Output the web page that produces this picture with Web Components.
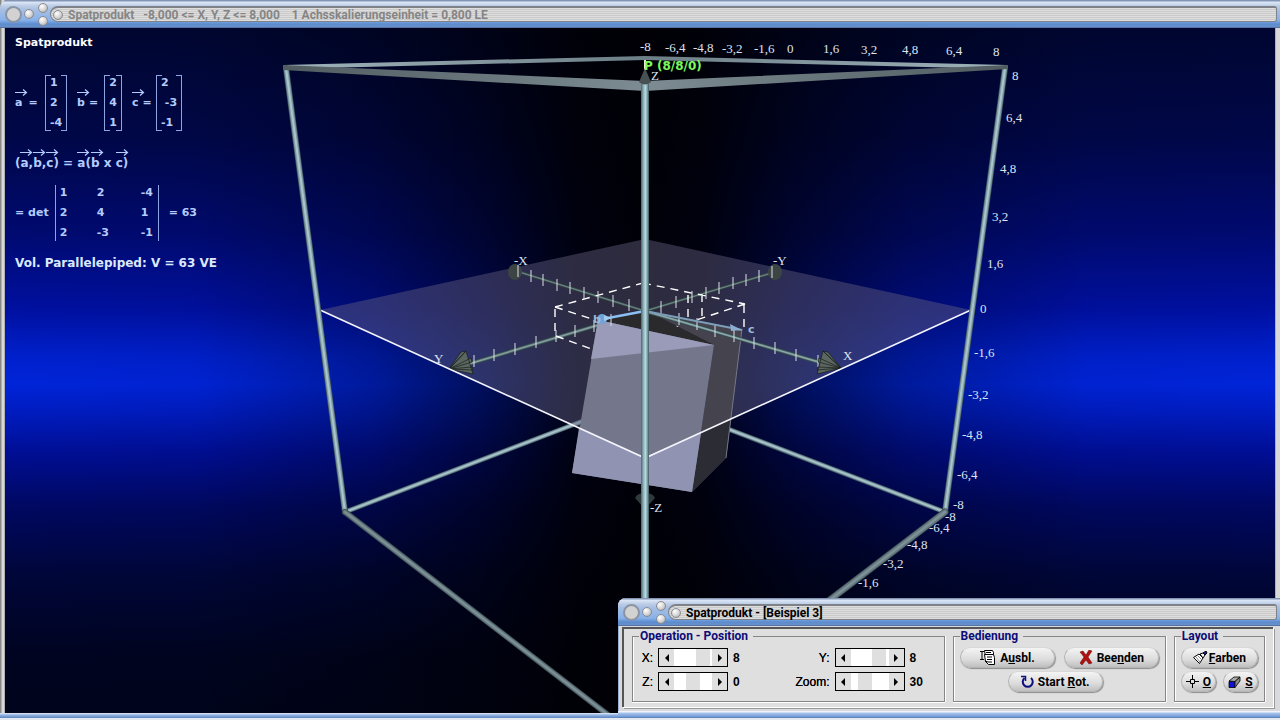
<!DOCTYPE html>
<html lang="de">
<head>
<meta charset="utf-8">
<title>Spatprodukt</title>
<style>
  html, body { margin: 0; height: 100%; overflow: hidden; }
  body { font: bold 12px/14px Roboto, "Liberation Sans", sans-serif; color: #000; background: #e4e8f0; }
</style>
</head>
<body>
<sp-desktop></sp-desktop>
<script>
class Base extends HTMLElement {
  connectedCallback() {
    if (this.shadowRoot) return;
    this.attachShadow({ mode: 'open' }).innerHTML = this.render();
    this.ready && this.ready();
  }
}

/* Title bar with the round window buttons and the ribbed grip */
class TitleBar extends Base {
  render() {
    return `<style>
      :host { display: flex; align-items: center; height: 28px; box-sizing: border-box; padding: 0 3px 0 5px; gap: 2px; color: #000;
        border-radius: 8px 0 0 0;
        background: linear-gradient(#8494b4 0, #8494b4 1px, #dce8f8 2px, #bccce6 6px, #a6bee2 10px, #88b2ea 20px, #5c8cd0 24px, #6890c8 27px, #405888 28px); }
      :host([inactive]) { color: #858585; }
      button { display: block; width: 10px; height: 10px; padding: 0; border: 1px solid #8c8c94; border-radius: 50%;
        background: radial-gradient(circle at 35% 30%, #fff, #d0d0d0 60%, #909090); }
      button.big { width: 17px; height: 17px; background: #d2d2d2; border: 2px solid #8a94a4; }
      .pair { display: grid; gap: 3px; margin-left: 2px; }
      .grip { flex: 1; display: flex; align-items: center; gap: 5px; height: 16px; box-sizing: border-box; padding-left: 2px;
        border: 1px solid #7e8288; border-top-width: 2px; border-radius: 9px 3px 3px 9px;
        background: repeating-linear-gradient(#dedede 0 1px, #cacaca 1px 2px); }
      h1 { margin: 0; font: inherit; white-space: pre; }
    </style>
    <button class="big" aria-label="Systemmenü"></button>
    <button aria-label="Minimieren"></button>
    <div class="pair"><button aria-label="Maximieren"></button><button aria-label="Verkleinern"></button></div>
    <div class="grip"><button aria-label="Einrollen"></button><h1><slot></slot></h1></div>`;
  }
}
customElements.define('title-bar', TitleBar);

/* A letter with a vector arrow above it */
class VecLetter extends Base {
  render() {
    return `<style>
      :host { display: inline-flex; flex-direction: column; }
      .box { width: 0; height: 7px; }
      svg { display: block; overflow: visible; }
    </style>
    <div class="box"><svg width="12" height="7" fill="none" stroke="#b4ccff" stroke-width="1.200"><path d="M0 3.5H11.500M8 .5l3.500 3-3.500 3"/></svg></div><span><slot></slot></span>`;
  }
}
customElements.define('vec-letter', VecLetter);

/* Column of matrix cells between square brackets, or rows between bars */
class MatrixBox extends Base {
  render() {
    const rows = this.getAttribute('rows').split(';').map(r => r.split(' '));
    const det = this.hasAttribute('det');
    return `<style>
      :host { display: grid; position: relative; box-sizing: border-box; grid-auto-rows: 20px; line-height: 20px; padding: 0 0 0 5px;
        grid-template-columns: ${det ? '37px 44px 1fr' : '1fr'}; }
      :host([det]) { width: 104px; }
      :host([center]) { text-align: center; padding: 0; }
      i { position: absolute; top: 2px; bottom: 2px; width: 5px; border: 1px solid #8ca4e4; }
      i.l { left: 0; border-right: 0; } i.r { right: 0; border-left: 0; }
      :host([det]) i { border-top: 0; border-bottom: 0; }
    </style><i class="l"></i>${rows.map(r => r.map(c => `<span>${c}</span>`).join('')).join('')}<i class="r"></i>`;
  }
}
customElements.define('matrix-box', MatrixBox);

class FormulaPanel extends Base {
  render() {
    return `<style>
      :host { display: block; padding: 8px 10px; font: bold 11px/14px "DejaVu Sans", sans-serif; color: #b4ccff; white-space: nowrap; }
      h2, p { margin: 0; font: inherit; }
      h2 { color: #fff; }
      .vectors { display: grid; grid-template-columns: 30px 22px 37px 18px 34px 26px; align-items: center; margin-top: 23px; }
      .term { display: flex; align-items: flex-end; padding: 0 0 8px 10px; gap: 4px; }
      .term:first-child { padding-left: 0; gap: 6px; }
      .line { display: flex; align-items: flex-end; white-space: pre; margin-top: 16px; font-size: 12px; }
      .det { display: flex; align-items: center; gap: 6px; margin-top: 13px; }
      .det span:last-child { margin-left: 4px; }
      .vol { margin-top: 13px; color: #dce8ff; font-size: 12px; }
    </style>
    <h2>Spatprodukt</h2>
    <div class="vectors">
      <div class="term"><vec-letter>a</vec-letter><span>=</span></div><matrix-box rows="1;2;-4"></matrix-box>
      <div class="term"><vec-letter>b</vec-letter><span>=</span></div><matrix-box center rows="2;4;1"></matrix-box>
      <div class="term"><vec-letter>c</vec-letter><span>=</span></div><matrix-box rows="2;&nbsp;-3;-1"></matrix-box>
    </div>
    <p class="line"><span>(</span><vec-letter>a</vec-letter><span>,</span><vec-letter>b</vec-letter><span>,</span><vec-letter>c</vec-letter><span>) = </span><vec-letter>a</vec-letter><span>(</span><vec-letter>b</vec-letter><span> x </span><vec-letter>c</vec-letter><span>)</span></p>
    <div class="det"><span>= det</span><matrix-box det rows="1 2 -4;2 4 1;2 -3 -1"></matrix-box><span>= 63</span></div>
    <p class="vol">Vol. Parallelepiped: V = 63 VE</p>`;
  }
}
customElements.define('formula-panel', FormulaPanel);

/* The 3D scene: cube frame, base plane, axes and parallelepiped */
class SceneView extends Base {
  render() {
    const tube = (x1, y1, x2, y2, w, c = ['#40545c', '#7e9aa4', '#a8c4cc']) =>
      [w, w - 1.5, w / 3].map((s, i) => `<line x1="${x1}" y1="${y1}" x2="${x2}" y2="${y2}" stroke="${c[i]}" stroke-width="${s}" stroke-linecap="round"/>`).join('');
    const dim = ['#38464c', '#64787e', '#7c9298'];
    const ticks = [
      [531,276],[543,280],[557,285],[570,288],[584,293],[598,297],[613,301],[629,305],
      [661,307],[676,302],[692,297],[706,293],[719,288],[733,283],[746,280],[759,276],[772,272],
      [679,319],[697,324],[715,331],[734,336],[754,343],[775,348],[796,355],[818,361],
      [611,320],[594,326],[575,331],[556,336],[536,342],[515,349],[494,355],[474,361],[518,271]]
      .map(([x, y]) => `M${x} ${y - 6}v12`).join('');
    const labels = [
      ['-8',640,51],['-6,4',665,52],['-4,8',693,52],['-3,2',722,53],['-1,6',754,53],['0',787,53],['1,6',823,53],['3,2',861,54],['4,8',902,54],['6,4',946,55],['8',993,56],
      ['8',1012,80],['6,4',1006,122],['4,8',1000,173],['3,2',992,221],['1,6',987,268],['0',980,313],['-1,6',974,357],['-3,2',968,399],['-4,8',962,439],['-6,4',957,479],['-8',953,509],
      ['-8',945,521],['-6,4',929,532],['-4,8',907,549],['-3,2',883,568],['-1,6',858,587],
      ['-X',514,265],['-Y',773,265],['Y',434,363],['X',843,360],['Z',651,80],['-Z',650,512]]
      .map(([t, x, y]) => `<text x="${x}" y="${y}">${t}</text>`).join('');
    return `<style>
      :host { display: block; min-height: 0; overflow: hidden;
        background:
          linear-gradient(90deg, transparent 0, rgba(0,0,0,.03) 15%, rgba(0,0,0,.28) 29%, rgba(0,0,4,.6) 38%, rgba(0,0,4,.9) 45%, rgba(0,0,4,.97) 50%, rgba(0,0,4,.9) 55%, rgba(0,0,4,.6) 62%, rgba(0,0,0,.28) 71%, rgba(0,0,0,.03) 85%, transparent),
          linear-gradient(#000630 0, #000748 16%, #000a70 30%, #0010a0 41%, #0020cc 48%, #0024d8 52%, #001cc0 56%, #000e94 62%, #000860 70%, #000638 80%, #000420 92%, #00041c); }
      svg { display: block; width: 100%; height: 100%; }
      text { font: 13px "Liberation Serif", serif; fill: #dde4f2; }
      .p { font: bold 12px "DejaVu Sans", sans-serif; fill: #7cf85c; }
      .v { font: bold 11px "DejaVu Sans", sans-serif; fill: #9cb8dc; }
    </style>
    <svg viewBox="5 28 1270 685" preserveAspectRatio="xMidYMin slice" role="img" aria-label="Spat im Koordinatenwürfel">
      <defs>
        <linearGradient id="back"><stop offset="0" stop-color="#a0b4bc"/><stop offset=".5" stop-color="#6c7e86"/><stop offset="1" stop-color="#a0b4bc"/></linearGradient>
        <linearGradient id="front"><stop offset="0" stop-color="#505c60"/><stop offset=".5" stop-color="#7c8c92"/><stop offset="1" stop-color="#505c60"/></linearGradient>
        <linearGradient id="post"><stop offset="0" stop-color="#48646c"/><stop offset=".3" stop-color="#8cb0b8"/><stop offset=".55" stop-color="#b8dae0"/><stop offset=".8" stop-color="#7c9ca4"/><stop offset="1" stop-color="#3c545c"/></linearGradient>
      </defs>
      <path fill="url(#back)" d="M284 65 645 56 1007 65V69L645 60 284 69Z"/>
      ${tube(345,512,583,421,5)}${tube(945,512,715,424,5)}
      <path fill="#64607f" fill-opacity=".45" d="M645 239 320 310 645 458 971 310Z"/>
      <g>
        ${tube(516,271,645,311,3,['#304040','#506468','#6c8484'])}${tube(775,272,645,311,3,['#304040','#506468','#6c8484'])}
        ${tube(645,311,462,366,4,['#304848','#587074','#88a0a4'])}
        <ellipse cx="515" cy="272" rx="7" ry="8" fill="#3c4444"/><ellipse cx="775" cy="272" rx="7" ry="8" fill="#3c4444"/>
      </g>
      <g stroke="#fff" stroke-width="1.400" stroke-dasharray="8 6" fill="none">
        <path d="M555 307 643 283M643 283 745 304M745 304 675 327M555 307 595 320M555 309V337M556 336 594 350M744 305V331M688 295V324M702 294V324"/>
      </g>
      <path fill="#2a2a2c" d="M598 320 645 311 714 345Z"/>
      <path fill="#45434e" d="M650 312 742 329 726 458 692 492 714 345Z"/>
      <path fill="#2c2c34" d="M731 420 726 458 692 492 700 433Z"/>
      <path fill="#2a2a2c" d="M645 311 714 345 692 341 645 331Z"/>
      <path fill="#74778c" d="M598 320 714 345 692 492 572 473Z"/>
      <path fill="#999bb8" d="M598 320 714 345 591 359Z"/>
      <path fill="#9094b2" d="M579 428 645 458 701 433 692 492 572 473Z"/>
      <path d="M742 329 726 458" stroke="#77778a" fill="none"/>
      ${tube(645,311,822,363,4,['#304848','#587074','#8ca8ac'])}
      <path d="${ticks}" stroke="#dce0e8" fill="none"/>
      <path d="M603 319 645 311" stroke="#8cc0f4" stroke-width="2.500"/>
      <circle cx="602" cy="319" r="5" fill="#6ea4d8"/><path d="M604 315l8 3-8 3Z" fill="#a0ccf0"/>
      <path d="M645 311 742 330" stroke="#7c9cb8" stroke-width="2"/><path d="M730 324l12 6-11 1Z" fill="#8cacd0"/>
      <g stroke="#171c18" stroke-width=".7">
        <path fill="#5c6660" d="M823 351 841 368 817 374ZM823 351 841 368 828 352ZM819 358 841 368 818 362ZM818 367 841 368 817 370Z"/>
        <path fill="#5c6660" d="M466 351 449 369 473 374ZM466 351 449 369 461 352ZM471 358 449 369 472 362ZM472 367 449 369 473 370Z"/>
      </g>
      <path d="M320 310 645 458 971 310" fill="none" stroke="#f4f4fc" stroke-width="1.600"/>
      ${tube(286,68,345,512,6)}${tube(1005,68,945,512,6)}
      ${tube(345,512,612,718,6,dim)}${tube(945,512,675,718,7,dim)}
      <path fill="url(#front)" d="M283 65 645 81 1008 65V69L645 91 283 70Z"/>
      <path fill="#303a3c" d="M635 498q2-5 10-5t10 5l-8 9h-4Z"/>
      <path stroke="#e8f4e8" stroke-width="2" d="M645 60v10"/>
      <path fill="url(#post)" d="M641 84h8V720h-8Z"/>
      <path fill="#475052" d="M645 68 651 82Q645 87 639 82Z"/>
      <text class="v" x="593" y="323">b</text><text class="v" x="748" y="333">c</text>
      <text class="p" x="644" y="70">P (8/8/0)</text>
      ${labels}
    </svg>`;
  }
}
customElements.define('scene-view', SceneView);

/* Scroll bar with arrow buttons, a label and its value */
class ScrollField extends Base {
  render() {
    const g = n => this.getAttribute(n);
    return `<style>
      :host { display: grid; grid-template-columns: auto 70px 20px; align-items: center; justify-content: end; column-gap: 5px; font: bold 12px/18px "Liberation Sans", sans-serif; }
      label { font-weight: normal; text-shadow: 0 0 0 #000; }
      .bar { display: flex; box-sizing: border-box; height: 19px; border: 1px solid #000; background: #fff; }
      button { width: 15px; padding: 0; border: 0; background: #dfdfdf; display: grid; place-items: center; }
      input { appearance: none; flex: 1; min-width: 0; margin: 0; background: #fff; height: 100%; }
      input::-webkit-slider-thumb { appearance: none; width: 14px; height: 17px; background: #dfdfdf; border: 0; border-radius: 0; }
    </style>
    <label for="r">${g('label')}</label>
    <div class="bar">
      <button aria-label="Weniger"><svg width="4" height="8"><path d="M4 0v8L0 4Z"/></svg></button>
      <input id="r" type="range" min="${g('min')}" max="${g('max')}" value="${g('value')}">
      <button aria-label="Mehr"><svg width="4" height="8"><path d="M0 0v8l4-4Z"/></svg></button>
    </div>
    <output for="r">${g('value')}</output>`;
  }
  ready() {
    const r = this.shadowRoot.querySelector('input'), o = this.shadowRoot.querySelector('output');
    const show = () => { o.textContent = r.value; };
    const [less, more] = this.shadowRoot.querySelectorAll('button');
    r.addEventListener('input', show);
    less.addEventListener('click', () => { r.stepDown(); show(); });
    more.addEventListener('click', () => { r.stepUp(); show(); });
  }
}
customElements.define('scroll-field', ScrollField);

const ICONS = {
  pages: '<svg width="17" height="17" viewBox="0 0 17 17" fill="#fff" stroke="#000"><path d="M5.500 1.500h8l1 2v4h-8z"/><path d="M1 2.500h4M3 2.500v8M1 10.500h4" /><path d="M5.500 5.500h9l1 3v7h-6l-3-3z"/><path d="M7 3.500h5M8 8h5M8 10.500h5M9 13h4M6 12l3 1" /></svg>',
  cross: '<svg width="14" height="15" viewBox="0 0 14 15"><path fill="#b01010" stroke="#600" stroke-width=".5" d="M1 2 4 1 7 5 10 0 13 1 9 7 13 13 10 14 7 10 3 15 1 13 5 7Z"/></svg>',
  rotate: '<svg width="13" height="13" viewBox="0 0 13 13" fill="none" stroke="#10107c" stroke-width="2"><path d="M3.500 3A5 5 0 1 0 10 3"/><path d="M0 1.500h4.500V6" stroke-width="1.500"/></svg>',
  brush: '<svg width="15" height="13" viewBox="0 0 15 13" stroke="#000" fill="#fff"><path d="M.5 6.500 6 3l4 4-3.500 5.500Z"/><path d="M3 6l4 5M5 5l4 4" stroke="#888"/><path d="M7 3l3-1 2 2-2 3Z"/><path d="M10 2 13 0l1 2-2 2Z" fill="#1818a0"/></svg>',
  target: '<svg width="13" height="13" viewBox="0 0 13 13" fill="none" stroke="#000"><path d="M6.500 0v4M6.500 9v4M0 6.500h4M9 6.500h4M4.500 4.500h4v4h-4z"/></svg>',
  solid: '<svg width="13" height="12" viewBox="0 0 13 12" stroke="#000" stroke-width=".8"><path fill="#1010d8" d="M1 5.500h6v6H1z"/><path fill="#aaa" d="M1 5 6 1h6L7 5.500Z"/><path fill="#888" d="M12 1v4l-5 6.500v-6Z"/></svg>'
};
class PillButton extends Base {
  render() {
    return `<style>
      :host { display: block; }
      button { display: flex; align-items: center; justify-content: center; gap: 4px; width: 100%; height: 21px; padding: 0; font: bold 12px/14px Roboto, sans-serif; color: #000;
        border: 1px solid #b4b4b4; border-top-color: #d8d8d8; border-radius: 11px; background: linear-gradient(#f4f4f4, #dcdcdc 60%, #c0c0c0); box-shadow: 1px 1px 1px #8c8c8c; }
      :host([tight]) button { gap: 1px; }
      svg { display: block; flex: none; }
    </style><button>${ICONS[this.getAttribute('icon')]}<span><slot></slot></span></button>`;
  }
}
customElements.define('pill-button', PillButton);

class GroupBox extends Base {
  render() {
    return `<style>
      :host { display: block; }
      fieldset { box-sizing: border-box; height: 100%; min-width: 0; margin: 0; padding: 4px 6px 9px; border: 1px solid #868686; box-shadow: 1px 0 0 #fff, 0 1px 0 #fff, inset 1px 0 0 #fff; }
      legend { padding: 0 5px 0 1px; color: #0c0c78; }
    </style><fieldset><legend>${this.getAttribute('label')}</legend><slot></slot></fieldset>`;
  }
}
customElements.define('group-box', GroupBox);

class ControlWindow extends Base {
  render() {
    return `<style>
      :host { display: block; border-radius: 8px 0 0 0; background: #d8dadd; box-shadow: inset 1px 0 0 #9ab0d0; }
      main { display: grid; grid-template-columns: 312fr 213fr 91fr; gap: 8px; margin: 1px 7px 0 4px; padding: 0 8px 5px; background: #dfdfdf;
        border: 1px solid #555; border-width: 2px 0 0 2px; box-shadow: 1px 1px 0 #fff, 2px 2px 0 #999; }
      .fields { display: grid; grid-template-columns: 114px 1fr; gap: 5px 6px; padding: 1px 8px 0 0; }
      .row { display: flex; justify-content: space-between; }
      .row + .row { margin-top: 3px; }
      .mid { justify-content: center; padding-right: 8px; }
      .w { width: 95px; } .full { width: 100%; } .s { width: 35px; }
      footer { height: 7px; margin-top: 4px; background: linear-gradient(#f0f4fa 0 1px, #a8c4ec 2px, #6e98d4 6px, #50709c); }
    </style>
    <title-bar>Spatprodukt - [Beispiel 3]</title-bar>
    <main>
      <group-box label="Operation - Position"><div class="fields">
        <scroll-field label="X:" min="-10" max="10" value="8"></scroll-field>
        <scroll-field label="Y:" min="-10" max="10" value="8"></scroll-field>
        <scroll-field label="Z:" min="-10" max="10" value="0"></scroll-field>
        <scroll-field label="Zoom:" min="0" max="90" value="30"></scroll-field>
      </div></group-box>
      <group-box label="Bedienung">
        <div class="row"><pill-button class="w" icon="pages">A<u>u</u>sbl.</pill-button><pill-button class="w" icon="cross">Bee<u>n</u>den</pill-button></div>
        <div class="row mid"><pill-button class="w" icon="rotate">Start <u>R</u>ot.</pill-button></div>
      </group-box>
      <group-box label="Layout">
        <div class="row"><pill-button tight class="full" icon="brush"><u>F</u>arben</pill-button></div>
        <div class="row"><pill-button class="s" icon="target"><u>O</u></pill-button><pill-button class="s" icon="solid"><u>S</u></pill-button></div>
      </group-box>
    </main>
    <footer></footer>`;
  }
}
customElements.define('control-window', ControlWindow);

/* Desktop: the graph window fills it, the control window floats over its corner */
class SpDesktop extends Base {
  render() {
    return `<style>
      :host { display: block; position: relative; height: 100vh; }
      .graph { display: grid; grid-template-rows: 28px minmax(0, 1fr) 5px; height: calc(100vh - 2px); background: linear-gradient(90deg, #888 0 1px, #d8d8d8 2px 4px, #888 5px, #888 calc(100% - 5px), #d8d8d8 calc(100% - 4px)); }
      .stage { display: grid; margin: 0 5px; min-height: 0; overflow: hidden; }
      .stage > * { grid-area: 1 / 1; min-height: 0; }
      formula-panel { z-index: 1; align-self: start; justify-self: start; }
      .foot { background: linear-gradient(#e4ecf8, #94b4e4 2px, #5c84bc); }
      control-window { position: absolute; right: 0; bottom: 2px; width: 662px; }
    </style>
    <div class="graph">
      <title-bar inactive>Spatprodukt   -8,000 &lt;= X, Y, Z &lt;= 8,000    1 Achsskalierungseinheit = 0,800 LE</title-bar>
      <div class="stage"><scene-view></scene-view><formula-panel></formula-panel></div>
      <div class="foot"></div>
    </div>
    <control-window></control-window>`;
  }
}
customElements.define('sp-desktop', SpDesktop);
</script>
</body>
</html>
